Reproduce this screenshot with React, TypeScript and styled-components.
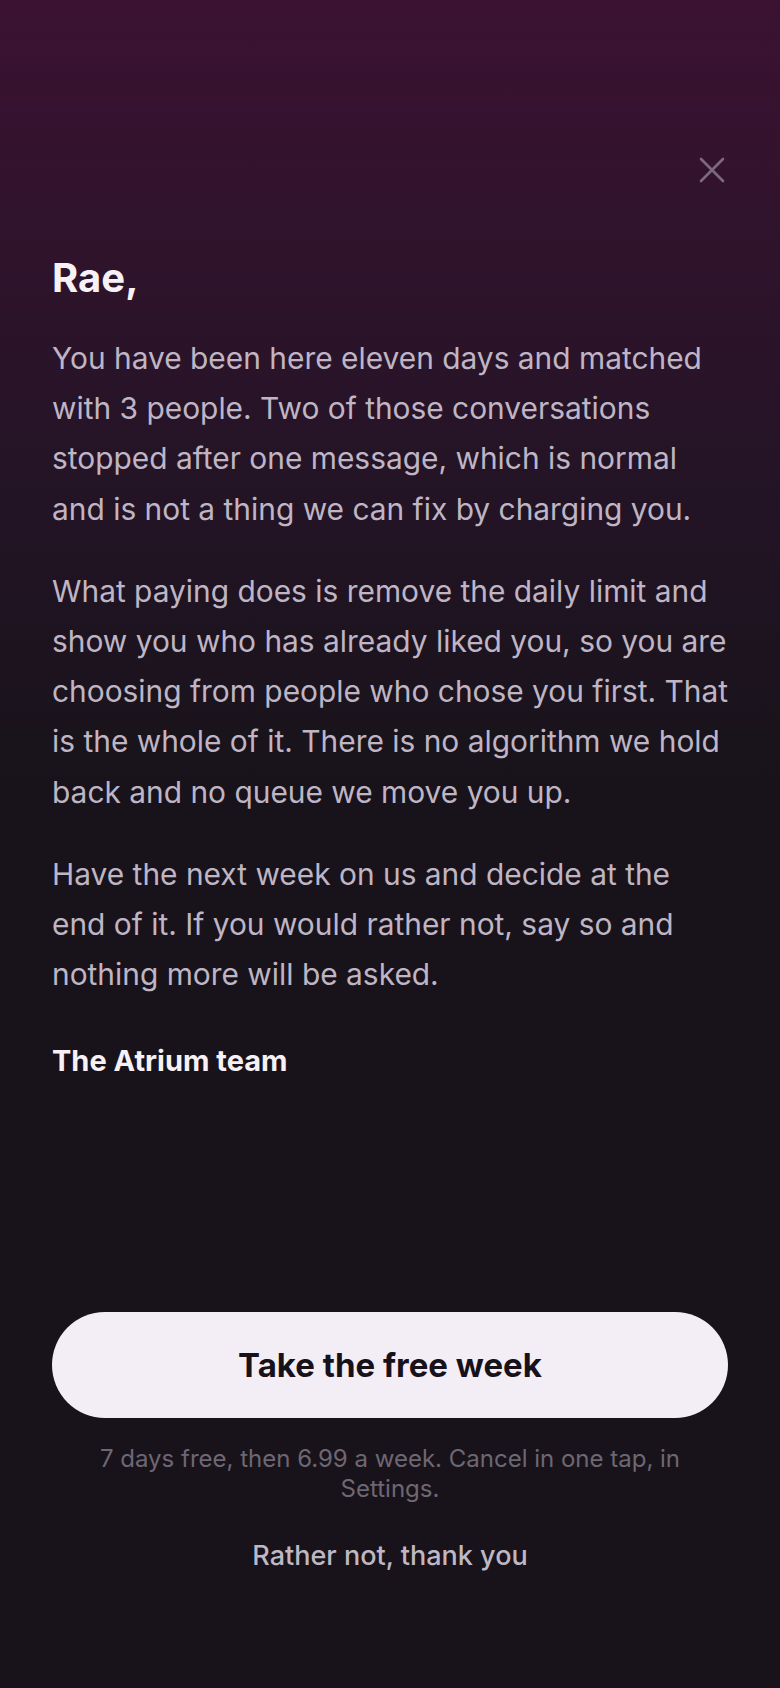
import React, { ReactElement } from 'react';
import styled, { createGlobalStyle } from 'styled-components';

const GlobalStyle = createGlobalStyle`
  html, body {
    margin: 0;
    padding: 0;
    background: #18131a;
  }
  * {
    box-sizing: border-box;
  }
`;

const Screen = styled.div`
  display: flex;
  flex-direction: column;
  min-height: 1688px;
  padding: 152px 52px 114px;
  font-family: Inter, 'Noto Sans', sans-serif;
  background: linear-gradient(180deg, #3b1232 0%, #241426 28%, #18131a 46%, #18131a 100%);
`;

const TopBar = styled.div`
  display: flex;
  justify-content: flex-end;
  margin-right: -2px;
`;

const CloseButton = styled.button`
  display: flex;
  align-items: center;
  justify-content: center;
  width: 36px;
  height: 36px;
  padding: 0;
  border: none;
  background: none;
  color: #7d6a80;
  cursor: pointer;
`;

const Letter = styled.div`
  display: flex;
  flex-direction: column;
  margin-top: 66px;
`;

const Greeting = styled.h1`
  margin: 0 0 31px;
  font-size: 40px;
  font-weight: 700;
  line-height: 48px;
  color: #f7f1f6;
`;

const Paragraph = styled.p`
  margin: 0 0 32px;
  font-size: 29.9px;
  font-weight: 400;
  line-height: 50.2px;
  color: #bfb5c4;
`;

const Signature = styled.p`
  margin: 10px 0 0;
  font-size: 29px;
  font-weight: 700;
  line-height: 40px;
  color: #f7f1f6;
`;

const Spacer = styled.div`
  flex: 1;
`;

const Actions = styled.div`
  display: flex;
  flex-direction: column;
  align-items: center;
`;

const PrimaryButton = styled.button`
  width: 100%;
  height: 106px;
  border: none;
  border-radius: 53px;
  background: #f3eef6;
  color: #17121a;
  font-family: inherit;
  font-size: 33px;
  font-weight: 700;
  cursor: pointer;
`;

const FinePrint = styled.p`
  margin: 26px 0 0;
  padding: 0 40px;
  font-size: 24px;
  line-height: 30px;
  text-align: center;
  color: #6e6773;
`;

const DeclineButton = styled.button`
  margin-top: 34px;
  padding: 0;
  border: none;
  background: none;
  color: #bfb8c3;
  font-family: inherit;
  font-size: 27px;
  font-weight: 500;
  line-height: 36px;
  cursor: pointer;
`;

const CloseIcon = () => (
  <svg width="28" height="28" viewBox="0 0 28 28" fill="none">
    <path d="M3 3L25 25M25 3L3 25" stroke="currentColor" strokeWidth="2.6" strokeLinecap="round" />
  </svg>
);

const App = (): ReactElement => {
  return (
    <>
      <GlobalStyle />
      <Screen>
        <TopBar>
          <CloseButton aria-label="Close">
            <CloseIcon />
          </CloseButton>
        </TopBar>
        <Letter>
          <Greeting>Rae,</Greeting>
          <Paragraph>
            You have been here eleven days and matched with 3 people. Two of those
            conversations stopped after one message, which is normal and is not a
            thing we can fix by charging you.
          </Paragraph>
          <Paragraph>
            What paying does is remove the daily limit and show you who has already
            liked you, so you are choosing from people who chose you first. That is
            the whole of it. There is no algorithm we hold back and no queue we move
            you up.
          </Paragraph>
          <Paragraph>
            Have the next week on us and decide at the end of it. If you would rather
            not, say so and nothing more will be asked.
          </Paragraph>
          <Signature>The Atrium team</Signature>
        </Letter>
        <Spacer />
        <Actions>
          <PrimaryButton>Take the free week</PrimaryButton>
          <FinePrint>7 days free, then 6.99 a week. Cancel in one tap, in Settings.</FinePrint>
          <DeclineButton>Rather not, thank you</DeclineButton>
        </Actions>
      </Screen>
    </>
  );
};

export default App;
